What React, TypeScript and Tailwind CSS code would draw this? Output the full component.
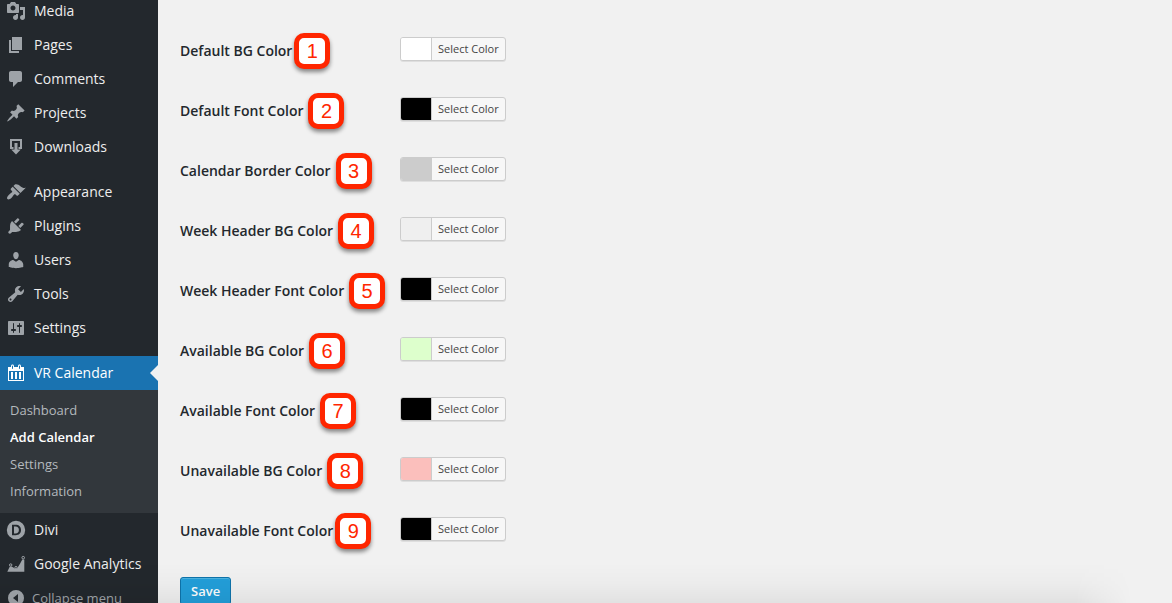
import type { ReactNode } from "react";

function Svg({ children }: { children: ReactNode }) {
  return (
    <svg viewBox="0 0 20 20" className="size-5 shrink-0 fill-current" aria-hidden="true">
      {children}
    </svg>
  );
}

const icons = {
  media: (
    <Svg>
      <path d="M13 11V4c0-.55-.45-1-1-1h-1.670L9 1H5L3.670 3H2c-.55 0-1 .45-1 1v7c0 .55.45 1 1 1h10c.55 0 1-.45 1-1zM7 4.500c1.380 0 2.500 1.120 2.500 2.500S8.380 9.500 7 9.500 4.500 8.380 4.500 7 5.620 4.500 7 4.500zM14 6h5v10.500c0 1.380-1.120 2.500-2.500 2.500S14 17.880 14 16.500s1.120-2.500 2.500-2.500c.17 0 .34.02.5.05V9h-3V6zm-4 8.050V13h2v3.500c0 1.380-1.120 2.500-2.500 2.500S7 17.880 7 16.500 8.120 14 9.500 14c.17 0 .34.02.5.05z" />
    </Svg>
  ),
  pages: (
    <Svg>
      <path d="M6 15V2h10v13H6zm-1 1h8v2H3V5h2v11z" />
    </Svg>
  ),
  comments: (
    <Svg>
      <path d="M5 2h9c1.100 0 2 .9 2 2v7c0 1.100-.9 2-2 2h-2l-5 5v-5H5c-1.100 0-2-.9-2-2V4c0-1.100.9-2 2-2z" />
    </Svg>
  ),
  pin: (
    <Svg>
      <path d="M10.440 3.020l1.820-1.820 6.360 6.350-1.830 1.820c-1.050-.68-2.480-.57-3.410.36l-.75.75c-.92.93-1.040 2.350-.35 3.410l-1.830 1.820-2.410-2.410-2.800 2.790c-.42.42-3.380 2.710-3.800 2.290s1.860-3.390 2.280-3.810l2.790-2.790L4.100 9.360l1.830-1.820c1.050.69 2.480.57 3.400-.36l.75-.75c.93-.92 1.050-2.350.36-3.410z" />
    </Svg>
  ),
  download: (
    <Svg>
      <path d="M4 2h12v10h-3.500v-2H14V4H6v6h1.500v2H4V2zm4.500 4h3v6.500h3.300L10 17.500l-4.800-5h3.300V6z" />
    </Svg>
  ),
  appearance: (
    <Svg>
      <path d="M14.480 11.060L7.410 3.990l1.500-1.500c.5-.56 2.300-.47 3.510.32 1.210.8 1.430 1.280 2.910 2.100 1.180.64 2.450 1.260 4.450.85zm-.71.71L6.700 4.700 4.930 6.470c-.39.39-.39 1.020 0 1.410l1.060 1.060c.39.39.39 1.030 0 1.420-.6.6-1.430 1.110-2.210 1.690-.35.26-.7.53-1.010.84C1.430 14.230.4 16.080 1.400 17.070c.99 1 2.840-.03 4.180-1.360.31-.31.58-.66.85-1.020.57-.78 1.080-1.610 1.690-2.210.39-.39 1.020-.39 1.410 0l1.060 1.060c.39.39 1.020.39 1.410 0z" />
    </Svg>
  ),
  plugins: (
    <Svg>
      <path d="M13.110 4.360L9.870 7.600 8 5.730l3.240-3.240c.35-.34 1.050-.2 1.560.32.52.51.66 1.210.31 1.550zm-8 1.770l.91-1.120 9.010 9.010-1.190.84c-.71.71-2.630 1.160-3.820 1.160H6.140L4.900 17.260c-.59.59-1.540.59-2.120 0-.59-.58-.59-1.530 0-2.120l1.240-1.240v-3.880c0-1.130.4-3.190 1.090-3.890zm7.260 3.970l3.240-3.240c.34-.35 1.040-.21 1.550.31.52.51.66 1.210.31 1.550l-3.240 3.250z" />
    </Svg>
  ),
  users: (
    <Svg>
      <path d="M10 9.250c-2.270 0-2.730-3.440-2.730-3.440C7 4.020 7.820 2 9.970 2c2.160 0 2.980 2.020 2.710 3.810 0 0-.41 3.440-2.680 3.440zm0 2.570L12.720 10c2.390 0 4.520 2.330 4.520 4.530v2.490s-3.650 1.130-7.240 1.130c-3.650 0-7.240-1.130-7.240-1.130v-2.490c0-2.250 1.940-4.480 4.470-4.480z" />
    </Svg>
  ),
  tools: (
    <Svg>
      <path d="M16.680 9.770c-1.340 1.340-3.300 1.670-4.950.99l-5.410 6.520c-.99.990-2.590.99-3.580 0s-.99-2.590 0-3.570l6.520-5.420c-.68-1.650-.35-3.610.99-4.950 1.280-1.280 3.120-1.620 4.720-1.060l-2.890 2.890 2.820 2.820 2.860-2.870c.53 1.580.18 3.390-1.080 4.650zM3.810 16.210c.4.390 1.040.39 1.430 0 .4-.4.4-1.040 0-1.430-.39-.4-1.030-.4-1.430 0-.39.39-.39 1.030 0 1.430z" />
    </Svg>
  ),
  settings: (
    <Svg>
      <path d="M18 16V4c0-.55-.45-1-1-1H3c-.55 0-1 .45-1 1v12c0 .55.45 1 1 1h14c.55 0 1-.45 1-1zM8 11h1c.55 0 1 .45 1 1s-.45 1-1 1H8v1.500c0 .28-.22.5-.5.5s-.5-.22-.5-.5V13H6c-.55 0-1-.45-1-1s.45-1 1-1h1V5.500c0-.28.22-.5.5-.5s.5.220.5.5V11zm5-2h-1c-.55 0-1-.45-1-1s.45-1 1-1h1V5.500c0-.28.22-.5.5-.5s.5.220.5.5V7h1c.55 0 1 .45 1 1s-.45 1-1 1h-1v5.500c0 .28-.22.5-.5.5s-.5-.22-.5-.5V9z" />
    </Svg>
  ),
  calendar: (
    <Svg>
      <path d="M15 4h3v14H2V4h3V3c0-.83.67-1.500 1.500-1.500S8 2.170 8 3v1h4V3c0-.83.67-1.500 1.500-1.500S15 2.170 15 3v1zM6 3v2.500c0 .28.22.5.5.5s.5-.22.5-.5V3c0-.28-.22-.5-.5-.5S6 2.720 6 3zm7 0v2.500c0 .28.22.5.5.5s.5-.22.5-.5V3c0-.28-.22-.5-.5-.5s-.5.220-.5.5zm4 14V8H3v9h14zM7 9v7H5V9h2zm4 0v7H9V9h2zm4 0v7h-2V9h2z" />
    </Svg>
  ),
  divi: (
    <Svg>
      <path fillRule="evenodd" d="M10 .8a9.200 9.200 0 1 1 0 18.400A9.200 9.200 0 0 1 10 .8zM6 4.800v10.400h3.700c3.300 0 5.300-2 5.300-5.200s-2-5.200-5.300-5.200H6zm2 1.800h1.600c2.100 0 3.300 1.200 3.300 3.400s-1.200 3.400-3.300 3.400H8V6.600z" />
    </Svg>
  ),
  analytics: (
    <Svg>
      <path d="M1.300 17.800L3.800 12.500l1.800-.1L9 14.600h2l3-4.800 2.300-4.300h2v12.300z" />
      <g className="fill-[#23282d] stroke-current">
        <circle cx="4.700" cy="11" r="1.200" />
        <circle cx="10" cy="13.500" r="1.100" />
        <circle cx="17.200" cy="3.700" r="1.300" />
      </g>
    </Svg>
  ),
  collapse: (
    <Svg>
      <path fillRule="evenodd" d="M10 2a8 8 0 1 1 0 16 8 8 0 0 1 0-16zm2 4l-5 4 5 4V6z" />
    </Svg>
  ),
};

type Item = { label: string; icon: ReactNode };

const content: Item[] = [
  { label: "Media", icon: icons.media },
  { label: "Pages", icon: icons.pages },
  { label: "Comments", icon: icons.comments },
  { label: "Projects", icon: icons.pin },
  { label: "Downloads", icon: icons.download },
];

const admin: Item[] = [
  { label: "Appearance", icon: icons.appearance },
  { label: "Plugins", icon: icons.plugins },
  { label: "Users", icon: icons.users },
  { label: "Tools", icon: icons.tools },
  { label: "Settings", icon: icons.settings },
];

const extras: Item[] = [
  { label: "Divi", icon: icons.divi },
  { label: "Google Analytics", icon: icons.analytics },
];

const submenu = ["Dashboard", "Add Calendar", "Settings", "Information"];

const fields = [
  { label: "Default BG Color", swatch: "bg-white", gap: "ml-0.5" },
  { label: "Default Font Color", swatch: "bg-black", gap: "ml-[5px]" },
  { label: "Calendar Border Color", swatch: "bg-[#cccccc]", gap: "ml-[5px]" },
  { label: "Week Header BG Color", swatch: "bg-[#efefef]", gap: "ml-[5px]" },
  { label: "Week Header Font Color", swatch: "bg-black", gap: "ml-[5px]" },
  { label: "Available BG Color", swatch: "bg-[#ddffcc]", gap: "ml-[5px]" },
  { label: "Available Font Color", swatch: "bg-black", gap: "ml-[5px]" },
  { label: "Unavailable BG Color", swatch: "bg-[#fbbfbc]", gap: "ml-[5px]" },
  { label: "Unavailable Font Color", swatch: "bg-black", gap: "ml-0.5" },
];

function MenuGroup({ items }: { items: Item[] }) {
  return (
    <ul>
      {items.map((item) => (
        <li key={item.label}>
          <a href="#" className="flex h-[34px] items-center gap-2 pl-1.5 font-medium text-[#eeeeee]">
            <span className="text-[#9ea3a8]">{item.icon}</span>
            {item.label}
          </a>
        </li>
      ))}
    </ul>
  );
}

export default function App() {
  return (
    <div className="relative flex h-screen overflow-hidden bg-[#f1f1f1] font-['Open_Sans',sans-serif] text-sm text-[#23282d]">
      <nav className="w-[158px] shrink-0 bg-[#23282d]" aria-label="Admin menu">
        <div className="-mt-1.5 flex flex-col">
          <div className="flex flex-col gap-[11px]">
            <MenuGroup items={content} />
            <MenuGroup items={admin} />
            <div>
              <a
                href="#"
                className="relative flex h-[34px] items-center gap-2 bg-[#1a73b1] pl-1.5 font-medium text-white"
              >
                {icons.calendar}
                VR Calendar
                <span className="absolute right-0 top-[9px] border-y-8 border-r-8 border-y-transparent border-r-[#f1f1f1]" />
              </a>
              <ul className="bg-[#32373c] pt-[7px] pb-2 text-[13px]">
                {submenu.map((label) => (
                  <li key={label}>
                    <a
                      href="#"
                      className={
                        label === "Add Calendar"
                          ? "flex h-[27px] items-center pl-2.5 font-semibold text-white"
                          : "flex h-[27px] items-center pl-2.5 font-medium text-[#b4b9be]"
                      }
                    >
                      {label}
                    </a>
                  </li>
                ))}
              </ul>
            </div>
          </div>
          <MenuGroup items={extras} />
          <button
            type="button"
            className="flex h-[34px] items-center gap-1.5 pl-1.5 text-[13px] font-medium text-[#a0a5aa]"
          >
            {icons.collapse}
            Collapse menu
          </button>
        </div>
      </nav>

      <main className="grow pl-[22px] pt-5">
        <form>
          {fields.map((field, i) => (
            <div key={field.label} className="flex h-[60px] items-start">
              <div className="flex w-[220px] items-center pt-[13px]">
                <label htmlFor={`color-${i}`} className="whitespace-nowrap font-semibold">
                  {field.label}
                </label>
                <span
                  className={`${field.gap} flex size-9 shrink-0 items-center justify-center rounded-[10px] border-5 border-[#ff2600] bg-white font-['Liberation_Sans',sans-serif] text-xl leading-none text-[#ff2600] shadow-[0_3px_4px_rgba(0,0,0,0.45)]`}
                >
                  {i + 1}
                </span>
              </div>
              <button
                id={`color-${i}`}
                type="button"
                className="mt-[17px] flex h-6 overflow-hidden rounded-[3px] border border-[#cccccc] bg-[#f7f7f7] text-[11px] text-[#444444] shadow-[0_1px_0_rgba(0,0,0,0.08)]"
              >
                <span className={`w-[30px] self-stretch ${field.swatch}`} />
                <span className="flex items-center self-stretch border-l border-[#cccccc] px-1.5">Select Color</span>
              </button>
            </div>
          ))}
          <button
            type="submit"
            className="mt-[17px] h-7 rounded-[3px] border border-[#0f74ab] bg-[#239fda] px-2.5 text-[13px] font-semibold text-white shadow-[inset_0_1px_0_rgba(120,200,230,0.5)]"
          >
            Save
          </button>
        </form>
      </main>
      <div className="pointer-events-none absolute left-0 right-10 bottom-0 h-10 bg-linear-to-b from-transparent via-black/2 to-black/6 mask-r-from-95%" />
    </div>
  );
}
